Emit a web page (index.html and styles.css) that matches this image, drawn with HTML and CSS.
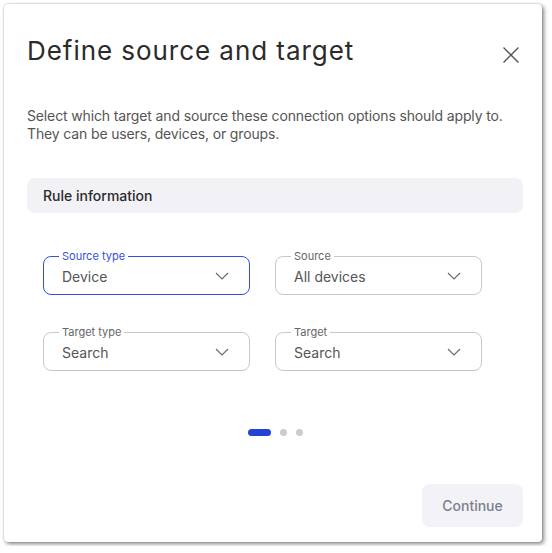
FILE: index.html
```html
<!DOCTYPE html>
<html lang="en">
<head>
<meta charset="utf-8">
<title>Define source and target</title>
<link rel="stylesheet" href="styles.css">
</head>
<body>
<div class="dialog">
  <div class="header">
    <h1 class="title">Define source and target</h1>
    <button class="close" aria-label="Close">
      <svg width="16" height="16" viewBox="0 0 16 16"><path d="M0.5 0.5 L15.5 15.5 M15.5 0.5 L0.5 15.5" stroke="#555" stroke-width="1.4" fill="none"/></svg>
    </button>
  </div>
  <p class="desc">Select which target and source these connection options should apply to. They can be users, devices, or groups.</p>
  <div class="section">Rule information</div>
  <div class="fields">
    <fieldset class="field focused">
      <legend>Source type</legend>
      <div class="value"><span>Device</span><svg class="chev" width="14" height="8" viewBox="0 0 14 8"><path d="M1 1 L7 7 L13 1" stroke="#666" stroke-width="1.1" fill="none"/></svg></div>
    </fieldset>
    <fieldset class="field">
      <legend>Source</legend>
      <div class="value"><span>All devices</span><svg class="chev" width="14" height="8" viewBox="0 0 14 8"><path d="M1 1 L7 7 L13 1" stroke="#666" stroke-width="1.1" fill="none"/></svg></div>
    </fieldset>
    <fieldset class="field">
      <legend>Target type</legend>
      <div class="value"><span>Search</span><svg class="chev" width="14" height="8" viewBox="0 0 14 8"><path d="M1 1 L7 7 L13 1" stroke="#666" stroke-width="1.1" fill="none"/></svg></div>
    </fieldset>
    <fieldset class="field">
      <legend>Target</legend>
      <div class="value"><span>Search</span><svg class="chev" width="14" height="8" viewBox="0 0 14 8"><path d="M1 1 L7 7 L13 1" stroke="#666" stroke-width="1.1" fill="none"/></svg></div>
    </fieldset>
  </div>
  <div class="dots">
    <span class="dot active"></span>
    <span class="dot"></span>
    <span class="dot"></span>
  </div>
  <div class="footer">
    <button class="continue">Continue</button>
  </div>
</div>
</body>
</html>
```
FILE: styles.css
```css
html, body {
  margin: 0;
  padding: 0;
  background: #ffffff;
}
body {
  font-family: Inter, "Noto Sans", sans-serif;
  color: #2b2b2b;
}
.dialog {
  box-sizing: border-box;
  margin: 4px;
  width: 538px;
  height: 538px;
  background: #fff;
  border-radius: 4px;
  box-shadow: 0 0 2px rgba(0,0,0,0.25), 2px 2px 4px rgba(0,0,0,0.45);
  padding: 0 19px 0 23px;
  display: flex;
  flex-direction: column;
}
.header {
  display: flex;
  justify-content: space-between;
  align-items: flex-start;
  padding-top: 31px;
}
.title {
  margin: 0;
  font-size: 26px;
  line-height: 32px;
  font-weight: 400;
  color: #2b2b2b;
  letter-spacing: 0.95px;
}
.close {
  border: 0;
  background: none;
  padding: 0;
  margin: 12px 4px 0 0;
  width: 16px;
  height: 16px;
  cursor: pointer;
}
.close svg { display: block; }
.desc {
  margin: 40px 0 0;
  font-size: 14px;
  line-height: 18px;
  color: #555;
  letter-spacing: -0.14px;
}
.section {
  margin-top: 35px;
  height: 35px;
  line-height: 35px;
  background: #f1f1f6;
  border-radius: 8px;
  padding-left: 16px;
  font-size: 14px;
  font-weight: 500;
  color: #2b2b2b;
}
.fields {
  margin: 36px 0 0 16px;
  display: grid;
  grid-template-columns: 207px 207px;
  column-gap: 25px;
  row-gap: 30px;
}
.field {
  margin: 0;
  padding: 1px 20px 6px 18px;
  min-width: 0;
  border: 1px solid #c8c8c8;
  border-radius: 8px;
}
.field legend {
  margin-left: -3px;
  padding: 0 3px;
  font-size: 11px;
  line-height: 14px;
  color: #666;
}
.field.focused {
  border-color: #3450dc;
}
.field.focused legend {
  color: #3450dc;
}
.value {
  display: flex;
  justify-content: space-between;
  align-items: center;
  height: 24px;
  font-size: 14px;
  color: #555;
}
.chev { display: block; }
.dots {
  margin-top: 58px;
  display: flex;
  justify-content: center;
  align-items: center;
  gap: 9px;
}
.dot {
  width: 7px;
  height: 7px;
  border-radius: 50%;
  background: #cccccc;
}
.dot.active {
  width: 23px;
  border-radius: 4px;
  background: #2342d6;
}
.footer {
  margin-top: auto;
  padding-bottom: 15px;
  display: flex;
  justify-content: flex-end;
}
.continue {
  width: 101px;
  height: 43px;
  border: 0;
  border-radius: 8px;
  background: #f2f2f7;
  color: #7b7f8c;
  font-family: Inter, "Noto Sans", sans-serif;
  font-size: 14px;
  font-weight: 500;
}
```
